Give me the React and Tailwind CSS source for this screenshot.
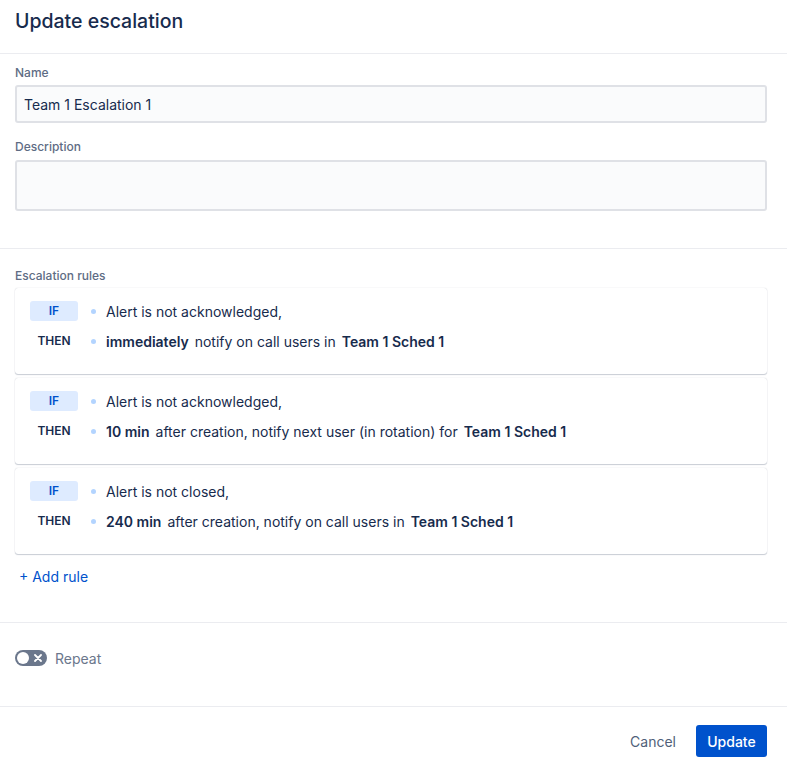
import React from "react";

const rules = [
  { cond: "Alert is not acknowledged,", parts: [["immediately", true], ["notify on call users in", false], ["Team 1 Sched 1", true]] },
  { cond: "Alert is not acknowledged,", parts: [["10 min", true], ["after creation, notify next user (in rotation) for", false], ["Team 1 Sched 1", true]] },
  { cond: "Alert is not closed,", parts: [["240 min", true], ["after creation, notify on call users in", false], ["Team 1 Sched 1", true]] },
];

function Rule({ r }) {
  return (
    <div className="bg-white rounded-[3px] shadow-[0_1px_1px_rgba(9,30,66,0.2),0_0_1px_rgba(9,30,66,0.25)] h-[86px] pt-[13px] px-[15px]">
      <div className="flex items-center h-[20px]">
        <div className="w-[48px] h-[20px] bg-[#DEEBFF] rounded-[3px] text-[#0052CC] text-[12px] font-semibold flex items-center justify-center">IF</div>
        <div className="w-[5px] h-[5px] rounded-full bg-[#B3D4FF] ml-[13px]" />
        <div className="ml-[10px] text-[14px] text-[#172B4D]">{r.cond}</div>
      </div>
      <div className="flex items-center h-[20px] mt-[10px]">
        <div className="w-[48px] text-[#172B4D] text-[12px] font-semibold flex items-center justify-center">THEN</div>
        <div className="w-[5px] h-[5px] rounded-full bg-[#B3D4FF] ml-[13px]" />
        <div className="ml-[10px] text-[14px] text-[#172B4D] flex gap-[6px] whitespace-pre">
          {r.parts.map(([t, b], i) => (
            <span key={i} className={b ? "font-semibold" : ""}>{t}</span>
          ))}
        </div>
      </div>
    </div>
  );
}

export default function App() {
  return (
    <div className="w-[787px] h-[775px] bg-white text-[#172B4D]" style={{ fontFamily: "Inter, 'Noto Sans', sans-serif" }}>
      <div className="h-[54px] pl-[15px] pr-[20px] flex items-center border-b border-[#EBECF0]">
        <h1 className="text-[19.5px] font-medium text-[#172B4D] leading-none -mt-[9px]">Update escalation</h1>
      </div>
      <div className="pl-[15px] pr-[20px] pt-[11px] pb-[37px] border-b border-[#EBECF0]">
        <div className="text-[12px] text-[#5E6C84] leading-[16px] font-medium">Name</div>
        <div className="mt-[4px] h-[38px] bg-[#FAFBFC] border-2 border-[#DFE1E6] rounded-[3px] flex items-center px-[7px] text-[14px] text-[#172B4D]">Team 1 Escalation 1</div>
        <div className="text-[12px] text-[#5E6C84] leading-[16px] font-medium mt-[16px]">Description</div>
        <div className="mt-[5px] h-[51px] bg-[#FAFBFC] border-2 border-[#DFE1E6] rounded-[3px]" />
      </div>
      <div className="pl-[15px] pr-[20px] pt-[19px] pb-[36px] border-b border-[#EBECF0]">
        <div className="text-[12px] text-[#5E6C84] leading-[16px] font-medium">Escalation rules</div>
        <div className="mt-[4px] flex flex-col gap-[4px]">
          {rules.map((r, i) => <Rule key={i} r={r} />)}
        </div>
        <div className="mt-[14px] ml-[4px] text-[14px] text-[#0052CC] leading-[18px]">+ Add rule</div>
      </div>
      <div className="h-[84px] px-[15px] flex items-center border-b border-[#EBECF0]">
        <div className="flex items-center gap-[8px] -mt-[13px]">
          <div className="w-[32px] h-[16px] rounded-full bg-[#6B778C] relative flex items-center">
            <div className="w-[12px] h-[12px] rounded-full bg-white ml-[2px]" />
            <svg className="absolute right-[5px]" width="8" height="8" viewBox="0 0 8 8">
              <path d="M1 1L7 7M7 1L1 7" stroke="white" strokeWidth="1.8" strokeLinecap="round" />
            </svg>
          </div>
          <span className="text-[14px] text-[#6B778C]">Repeat</span>
        </div>
      </div>
      <div className="flex justify-end items-center gap-[6px] pl-[20px] pr-[20px] pt-[18px]">
        <button className="h-[32px] px-[14px] text-[14px] text-[#505F79]">Cancel</button>
        <button className="h-[32px] w-[71px] rounded-[3px] bg-[#0052CC] text-white text-[14px] font-medium">Update</button>
      </div>
    </div>
  );
}
